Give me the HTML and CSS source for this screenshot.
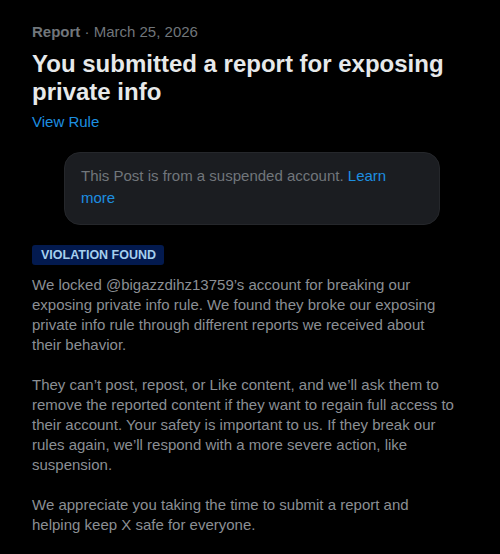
FILE: index.html
```html
<!DOCTYPE html>
<html>
  <head>
    <title>Report</title>
    <link rel="stylesheet" href="styles.css">
  </head>
  <body>
    <div class="report">
      <div class="meta"><span class="kind">Report</span> · March 25, 2026</div>
      <h1>You submitted a report for exposing<br />private info</h1>
      <a class="rule" href="#">View Rule</a>

      <div class="notice">
        This Post is from a suspended account. <a href="#">Learn<br />more</a>
      </div>

      <span class="badge">VIOLATION FOUND</span>

      <p>We locked @bigazzdihz13759’s account for breaking our<br />
        exposing private info rule. We found they broke our exposing<br />
        private info rule through different reports we received about<br />
        their behavior.</p>
      <p>They can’t post, repost, or Like content, and we’ll ask them to<br />
        remove the reported content if they want to regain full access to<br />
        their account. Your safety is important to us. If they break our<br />
        rules again, we’ll respond with a more severe action, like<br />
        suspension.</p>
      <p>We appreciate you taking the time to submit a report and<br />
        helping keep X safe for everyone.</p>
    </div>
  </body>
</html>
```

FILE: styles.css
```css
body {
    background-color: #000;
    color: #e7e9ea;
    font-family: "Liberation Sans", Arial, sans-serif;
    margin: 0;
}
a {
    color: #1d8fe0;
    text-decoration: none;
}
.report {
    padding: 22px 20px 0 32px;
    width: 448px;
}
.meta {
    color: #71767b;
    font-size: 15px;
    line-height: 20px;
}
.meta .kind {
    font-weight: bold;
}
h1 {
    font-size: 24px;
    font-weight: 800;
    line-height: 28px;
    margin: 8px 0 6px 0;
}
.rule {
    display: block;
    font-size: 15px;
    line-height: 20px;
}
.notice {
    background-color: #1b1d21;
    border: 1px solid #25272b;
    border-radius: 16px;
    color: #71767b;
    font-size: 15px;
    line-height: 22px;
    margin: 20px 0 20px 32px;
    padding: 12px 16px 15px 16px;
    width: 342px;
}
.badge {
    background-color: #031a4f;
    border-radius: 3px;
    color: #a6cfee;
    display: inline-block;
    font-size: 12.5px;
    font-weight: bold;
    line-height: 20px;
    padding: 0 8px 0 9px;
}
p {
    color: #8b8f94;
    font-size: 15px;
    line-height: 20px;
    margin: 10px 0 20px 0;
}
p + p {
    margin-top: 0;
}
```
